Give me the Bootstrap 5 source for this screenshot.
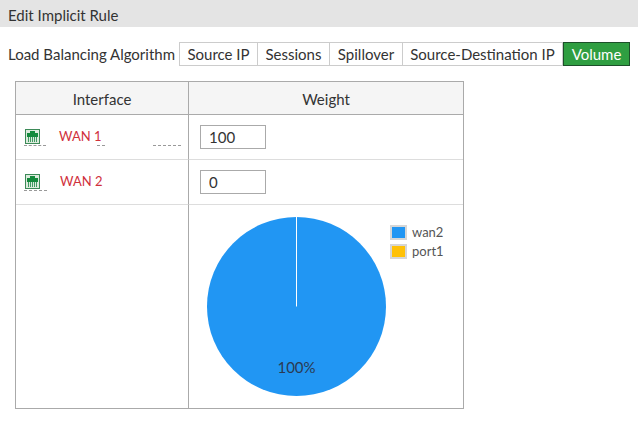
<!DOCTYPE html>
<html lang="en">
<head>
  <title>Edit Implicit Rule</title>
  <meta charset="utf-8" />
  <meta name="viewport" content="width=device-width, initial-scale=1" />
  <link href="https://cdn.jsdelivr.net/npm/bootstrap@5.3.3/dist/css/bootstrap.min.css" rel="stylesheet" />
  <script src="https://cdn.jsdelivr.net/npm/bootstrap@5.3.3/dist/js/bootstrap.bundle.min.js"></script>
  <style>
    body {
      font-family: Lato, sans-serif;
      font-size: 15px;
      color: #333;
      background: #fff;
    }
    .head-bar {
      background: #e4e4e4;
      height: 27px;
      line-height: 30px;
      padding-left: 8px;
      margin-right: 1px;
    }
    .algo-row {
      padding: 15px 0 0 8px;
      height: 54px;
    }
    .algo-label {
      width: 171px;
      line-height: 24px;
    }
    .algo-btn {
      height: 24px;
      line-height: 22px;
      border: 1px solid #ccc;
      margin-right: -1px;
      padding: 0;
      text-align: center;
      background: #fff;
      color: #333;
      font-size: 15px;
    }
    .algo-btn.picked {
      background: #2f9e41;
      border: 1px solid #1c4f29;
      color: #fff;
      margin-left: 1px;
      border-radius: 0;
    }
    .rule-table {
      margin-left: 15px;
      width: 449px;
      height: 328px;
      border: 1px solid #aaa;
      display: grid;
      grid-template-columns: 173px 1fr;
      grid-template-rows: 33px 45px 45px 1fr;
    }
    .cell-head {
      background: #f5f5f5;
      border-bottom: 1px solid #aaa;
      line-height: 35px;
      text-align: center;
    }
    .left-col {
      border-right: 1px solid #aaa;
    }
    .row-line {
      border-bottom: 1px solid #ddd;
    }
    .wan-name {
      color: #d0303c;
      font-size: 13px;
      line-height: 21px;
      white-space: nowrap;
    }
    .port-icon {
      width: 16px;
      height: 15px;
      display: block;
      margin-left: 1px;
    }
    .port-wrap {
      margin: 14px 0 0 8px;
      padding-bottom: 1px;
      border-bottom: 1px dashed #999;
    }
    .dash-mark {
      height: 31px;
      border-bottom: 1px dashed #999;
    }
    .weight-box {
      width: 66px;
      height: 24px;
      border: 1px solid #aaa;
      padding: 0 8px;
      font: 15px Lato, sans-serif;
      color: #333;
      border-radius: 0;
      outline: 0;
    }
    .chart-area {
      padding: 11px 0 0 17px;
    }
    .pie-svg {
      width: 181px;
      height: 181px;
      display: block;
    }
    .chart-legend {
      margin: 7px 0 0 3px;
      font-size: 13px;
      color: #555;
      line-height: 19px;
    }
    .swatch {
      width: 17px;
      height: 15px;
      border: 2px solid #d6d6d6;
      margin-right: 5px;
      display: inline-block;
    }
  </style>
</head>
<body>
  <div class="head-bar">Edit Implicit Rule</div>

  <div class="algo-row d-flex">
    <div class="algo-label">Load Balancing Algorithm</div>
    <button class="algo-btn" style="width:79px">Source IP</button>
    <button class="algo-btn" style="width:73px">Sessions</button>
    <button class="algo-btn" style="width:74px">Spillover</button>
    <button class="algo-btn" style="width:161px">Source-Destination IP</button>
    <button class="algo-btn picked" style="width:67px">Volume</button>
  </div>

  <div class="rule-table">
    <div class="cell-head left-col">Interface</div>
    <div class="cell-head">Weight</div>

    <div class="left-col row-line d-flex align-items-start">
      <div class="port-wrap" style="width:22px">
        <svg class="port-icon" viewBox="0 0 16 15"><use href="#port" /></svg>
      </div>
      <span class="wan-name" style="margin:11px 0 0 13px;width:42px">WAN 1</span>
      <span class="dash-mark" style="width:8px;margin-left:-4px"></span>
      <span class="dash-mark" style="width:28px;margin-left:48px"></span>
    </div>
    <div class="row-line d-flex align-items-center" style="padding-left:11px">
      <input class="weight-box" value="100" />
    </div>

    <div class="left-col row-line d-flex align-items-start">
      <div class="port-wrap" style="width:23px">
        <svg class="port-icon" viewBox="0 0 16 15"><use href="#port" /></svg>
      </div>
      <span class="wan-name" style="margin:11px 0 0 13px">WAN 2</span>
    </div>
    <div class="row-line d-flex align-items-center" style="padding-left:11px">
      <input class="weight-box" value="0" />
    </div>

    <div class="left-col"></div>
    <div class="chart-area d-flex">
      <svg class="pie-svg" viewBox="0 0 181 181">
        <circle cx="90.5" cy="90.5" r="89.5" fill="#2196f3" />
        <line x1="90.5" y1="0" x2="90.5" y2="90.5" stroke="#fff" stroke-width="1" />
        <text x="90.5" y="157" text-anchor="middle" font-family="Lato, sans-serif" font-size="15" fill="#2b3a52">100%</text>
      </svg>
      <div class="chart-legend">
        <div class="d-flex align-items-center"><span class="swatch" style="background:#2196f3"></span>wan2</div>
        <div class="d-flex align-items-center"><span class="swatch" style="background:#ffc107"></span>port1</div>
      </div>
    </div>
  </div>

  <svg width="0" height="0" class="d-block">
    <defs>
      <g id="port">
        <rect x="0.5" y="0.5" width="14" height="14" fill="#dcebdd" stroke="#3d8a58" />
        <path d="M5 2h5v2h3v4H2V4h3z" fill="#138a3c" />
        <path d="M3.5 8v5M5.5 8v5M7.5 8v5M9.5 8v5M11.5 8v5" stroke="#3f9a62" />
      </g>
    </defs>
  </svg>
</body>
</html>
